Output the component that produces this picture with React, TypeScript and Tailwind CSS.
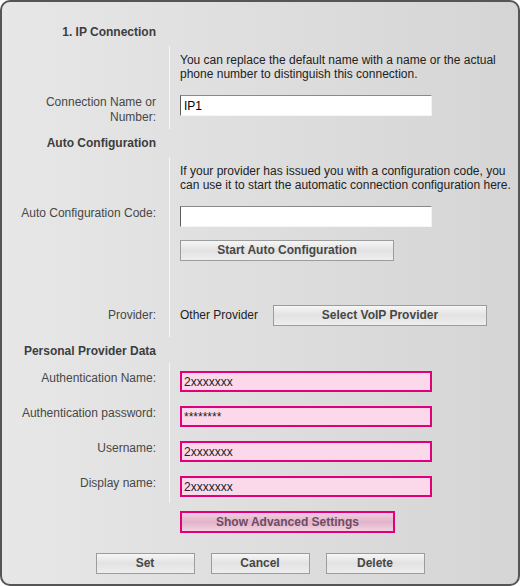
import type { ReactNode } from "react";

const GRAY_BUTTON =
  "block h-[21px] border border-[#9c9c9c] bg-linear-to-b from-[#f6f6f6] via-[#e2e2e2] to-[#eeeeee] text-[12px] font-bold leading-[19px] text-[#474747]";

const TEXT_INPUT =
  "block h-[21px] w-[252px] border border-t-[#8a8a8a] border-l-[#5e5e5e] border-r-[#f2f2f2] border-b-[#f6f6f6] bg-white px-[3px] text-[12px] leading-[19px] text-black outline-none";

const PINK_INPUT =
  "block h-[21px] w-[252px] border-2 border-[#e2007a] bg-[#fbd9eb] px-[2px] text-[12px] leading-[17px] text-[#222] outline-none";

export default function App() {
  return (
    <div className="h-[586px] w-[520px] font-['Liberation_Sans',Arial,sans-serif]">
      <div className="flex h-full flex-col rounded-[10px] border-2 border-[#555555] bg-linear-to-r from-[#e7e7e7] to-[#d5d5d5] pt-[23px]">
        <SectionTitle>1. IP Connection</SectionTitle>
        <div className="mt-[6px]">
          <Row pt="pt-[7px]">
            <p className="text-[12px] leading-[14px] text-[#222]">
              You can replace the default name with a name or the actual
              <br />
              phone number to distinguish this connection.
            </p>
          </Row>
          <Row pt="pt-[14px]" pb="pb-[13px]" label={<>Connection Name or<br />Number:</>}>
            <input readOnly defaultValue="IP1" className={TEXT_INPUT} />
          </Row>
        </div>

        <div className="mt-[7px]">
          <SectionTitle>Auto Configuration</SectionTitle>
        </div>
        <div className="mt-[6px]">
          <Row pt="pt-[7px]">
            <p className="whitespace-nowrap text-[12px] leading-[14px] text-[#222]">
              If your provider has issued you with a configuration code, you
              <br />
              can use it to start the automatic connection configuration here.
            </p>
          </Row>
          <Row pt="pt-[14px]" label="Auto Configuration Code:">
            <input readOnly defaultValue="" className={TEXT_INPUT} />
          </Row>
          <Row pt="pt-[13px]">
            <button className={`${GRAY_BUTTON} w-[214px]`}>Start Auto Configuration</button>
          </Row>
          <Row pt="pt-[44px]" pb="pb-[11px]" label="Provider:" labelClass="leading-[21px]">
            <div className="flex items-center">
              <span className="w-[93px] text-[12px] leading-[21px] text-[#222]">Other Provider</span>
              <button className={`${GRAY_BUTTON} w-[214px]`}>Select VoIP Provider</button>
            </div>
          </Row>
        </div>

        <div className="mt-[7px]">
          <SectionTitle>Personal Provider Data</SectionTitle>
        </div>
        <div className="mt-[4px]">
          <Row pt="pt-[8px]" label="Authentication Name:">
            <input readOnly defaultValue="2xxxxxxx" className={PINK_INPUT} />
          </Row>
          <Row pt="pt-[14px]" label="Authentication password:">
            <input readOnly defaultValue="********" className={`${PINK_INPUT} leading-[12px]`} />
          </Row>
          <Row pt="pt-[14px]" label="Username:">
            <input readOnly defaultValue="2xxxxxxx" className={PINK_INPUT} />
          </Row>
          <Row pt="pt-[14px]" pb="pb-[6px]" label="Display name:">
            <input readOnly defaultValue="2xxxxxxx" className={PINK_INPUT} />
          </Row>
        </div>

        <div className="mt-[8px] pl-[178px]">
          <button className="block h-[22px] w-[215px] border-2 border-[#e2007a] bg-linear-to-b from-[#f3cfe0] via-[#e2b3c9] to-[#f2d2e1] text-[12px] font-bold leading-[18px] text-[#6e4c62]">
            Show Advanced Settings
          </button>
        </div>

        <div className="mt-[20px] flex justify-center gap-[16px]">
          <button className={`${GRAY_BUTTON} w-[99px]`}>Set</button>
          <button className={`${GRAY_BUTTON} w-[99px]`}>Cancel</button>
          <button className={`${GRAY_BUTTON} w-[99px]`}>Delete</button>
        </div>
      </div>
    </div>
  );
}

function SectionTitle({ children }: { children: ReactNode }) {
  return (
    <div className="w-[154px] text-right text-[12px] font-bold leading-[15px] text-[#3d3d3d]">
      {children}
    </div>
  );
}

function Row({
  label,
  labelClass = "leading-[15px]",
  pt,
  pb = "",
  children
}: {
  label?: ReactNode;
  labelClass?: string;
  pt: string;
  pb?: string;
  children: ReactNode;
}) {
  return (
    <div className="flex">
      <div className={`w-[154px] shrink-0 text-right text-[12px] text-[#474747] ${labelClass} ${pt}`}>
        {label}
      </div>
      <div className={`ml-[13px] flex-1 border-l border-[#f6f6f6] pl-[10px] ${pt} ${pb}`}>
        {children}
      </div>
    </div>
  );
}
